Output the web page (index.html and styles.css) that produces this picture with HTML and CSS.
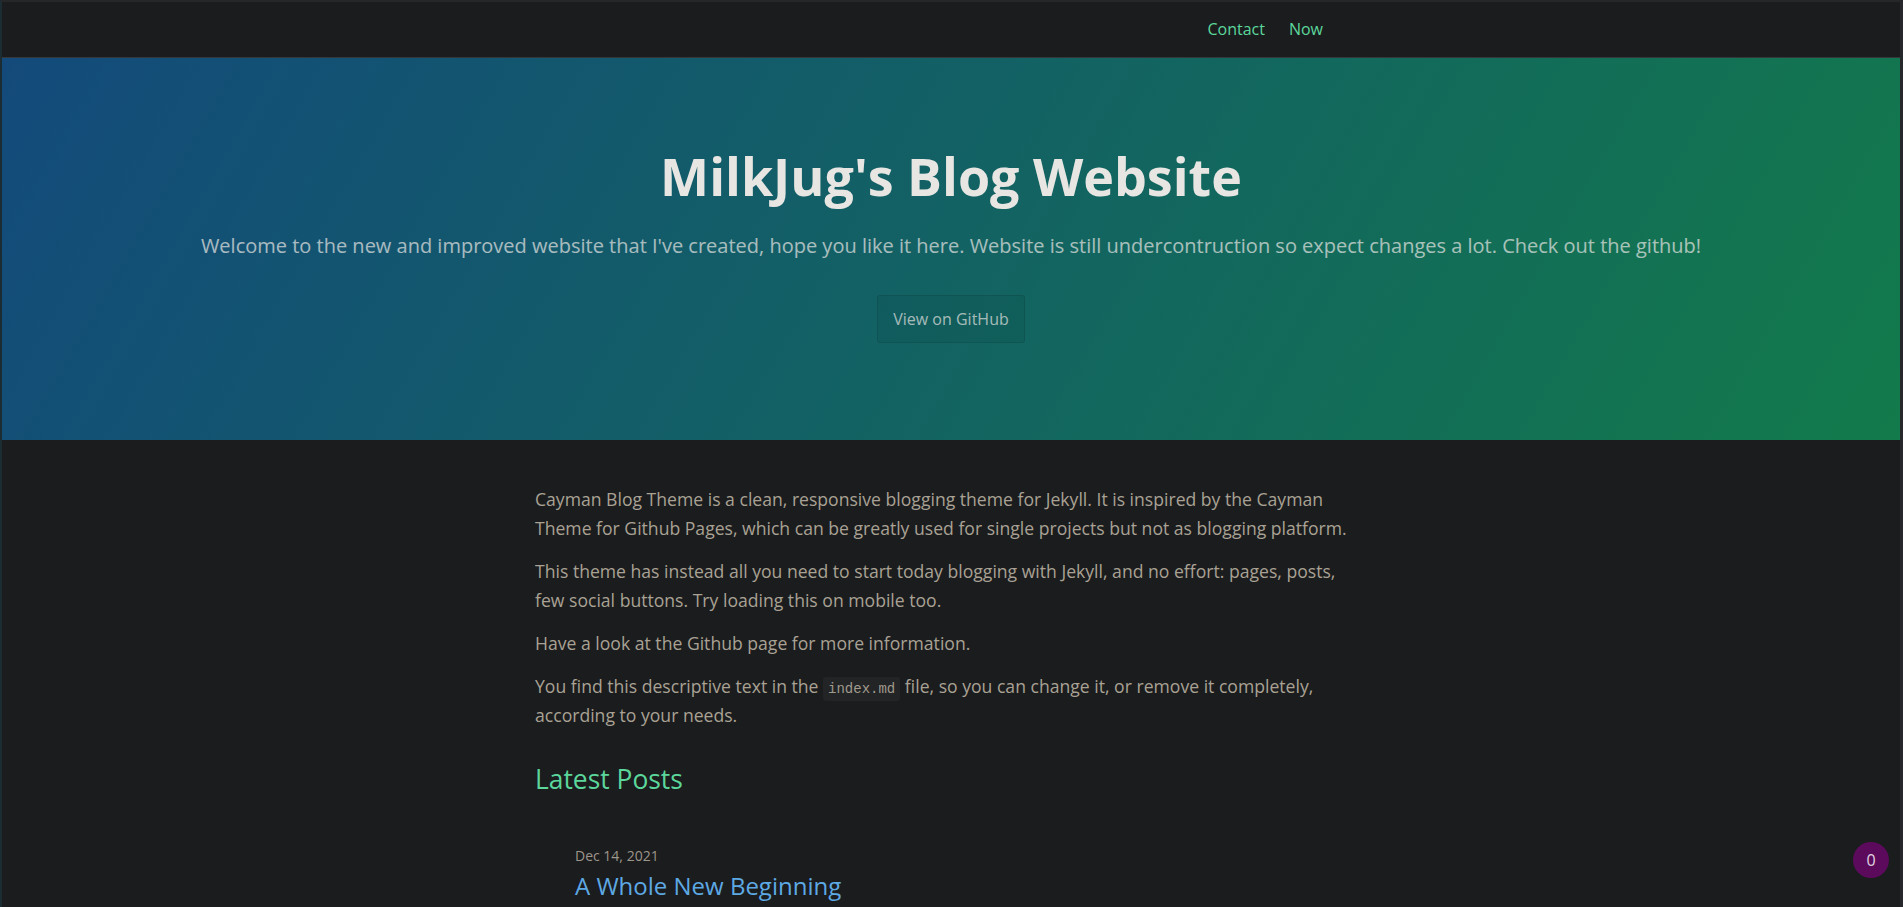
FILE: index.html
```html
<!DOCTYPE html>
<html lang="en">
<head>
<meta charset="utf-8">
<title>MilkJug's Blog Website</title>
<link rel="stylesheet" href="styles.css">
</head>
<body>
<div class="frame">
  <nav class="topnav">
    <div class="topnav-inner">
      <a href="#" class="navlink">Contact</a>
      <a href="#" class="navlink">Now</a>
    </div>
  </nav>
  <header class="page-header">
    <h1 class="project-name">MilkJug's Blog Website</h1>
    <h2 class="project-tagline">Welcome to the new and improved website that I've created, hope you like it here. Website is still undercontruction so expect changes a lot. Check out the github!</h2>
    <a href="#" class="btn">View on GitHub</a>
  </header>
  <main class="main-content">
    <p>Cayman Blog Theme is a clean, responsive blogging theme for Jekyll. It is inspired by the Cayman Theme for Github Pages, which can be greatly used for single projects but not as blogging platform.</p>
    <p>This theme has instead all you need to start today blogging with Jekyll, and no effort: pages, posts, few social buttons. Try loading this on mobile too.</p>
    <p>Have a look at the Github page for more information.</p>
    <p>You find this descriptive text in the <code>index.md</code> file, so you can change it, or remove it completely, according to your needs.</p>
    <h2 class="section-title">Latest Posts</h2>
    <ul class="post-list">
      <li>
        <span class="post-meta">Dec 14, 2021</span>
        <a href="#" class="post-link">A Whole New Beginning</a>
      </li>
    </ul>
  </main>
  <div class="badge">0</div>
</div>
</body>
</html>
```
FILE: styles.css
```css
html, body {
  margin: 0;
  padding: 0;
  height: 100%;
  overflow: hidden;
  background: #1b1c1e;
}
body {
  font-family: "Open Sans", "Liberation Sans", sans-serif;
  color: #a9a294;
}
.frame {
  height: 100%;
  box-sizing: border-box;
  border-top: 2px solid #262729;
  border-left: 2px solid #1b2c33;
  border-right: 3px solid #26282b;
  background: #1b1c1e;
  position: relative;
  overflow: hidden;
}
.topnav {
  height: 55px;
  border-bottom: 1px solid #35373a;
  background: #1b1c1e;
}
.topnav-inner {
  max-width: 1024px;
  margin: 0 auto;
  height: 100%;
  display: flex;
  align-items: center;
  justify-content: flex-end;
  gap: 24px;
  padding: 0 140px 2px 0;
  box-sizing: border-box;
}
.navlink {
  color: #5bd79c;
  text-decoration: none;
  font-size: 16px;
}
.page-header {
  height: 382px;
  box-sizing: border-box;
  padding: 79px 96px 0;
  text-align: center;
  color: #e8e6e3;
  background-image: linear-gradient(120deg, #134a7b, #127a4b);
}
.project-name {
  margin: 0 0 16px;
  font-size: 52px;
  font-weight: 700;
  line-height: 1.5;
}
.project-tagline {
  margin: 0 0 34px;
  font-size: 20px;
  font-weight: 400;
  line-height: 1.5;
  opacity: 0.7;
}
.btn {
  display: inline-block;
  padding: 12px 15px;
  font-size: 16px;
  line-height: 22px;
  color: rgba(232, 230, 227, 0.7);
  text-decoration: none;
  background: rgba(0, 0, 0, 0.06);
  border: 1px solid rgba(0, 0, 0, 0.1);
  border-radius: 3px;
}
.main-content {
  max-width: 1024px;
  margin: 0 auto;
  padding: 45px 96px;
  box-sizing: border-box;
  font-size: 17.6px;
  line-height: 29px;
}
.main-content p {
  margin: 0 0 14px;
}
code {
  font-family: "Liberation Mono", monospace;
  font-size: 14px;
  line-height: 1;
  padding: 4px 5px;
  border-radius: 3px;
  background: #222426;
  color: #a09a8d;
}
.section-title {
  margin: 32px 0 0;
  font-size: 26.4px;
  font-weight: 400;
  color: #5bd79c;
  line-height: 34px;
}
.post-list {
  list-style: none;
  margin: 50px 0 0;
  padding-left: 40px;
}
.post-meta {
  display: block;
  font-size: 14px;
  line-height: 20px;
  color: #9d968a;
}
.post-link {
  display: block;
  font-size: 24px;
  line-height: 40px;
  color: #5da9e4;
  text-decoration: none;
}
.badge {
  position: absolute;
  right: 11px;
  bottom: 29px;
  width: 36px;
  height: 36px;
  border-radius: 50%;
  background: #5c0a5c;
  color: #e0d4e0;
  font-size: 16px;
  display: flex;
  align-items: center;
  justify-content: center;
}
```
